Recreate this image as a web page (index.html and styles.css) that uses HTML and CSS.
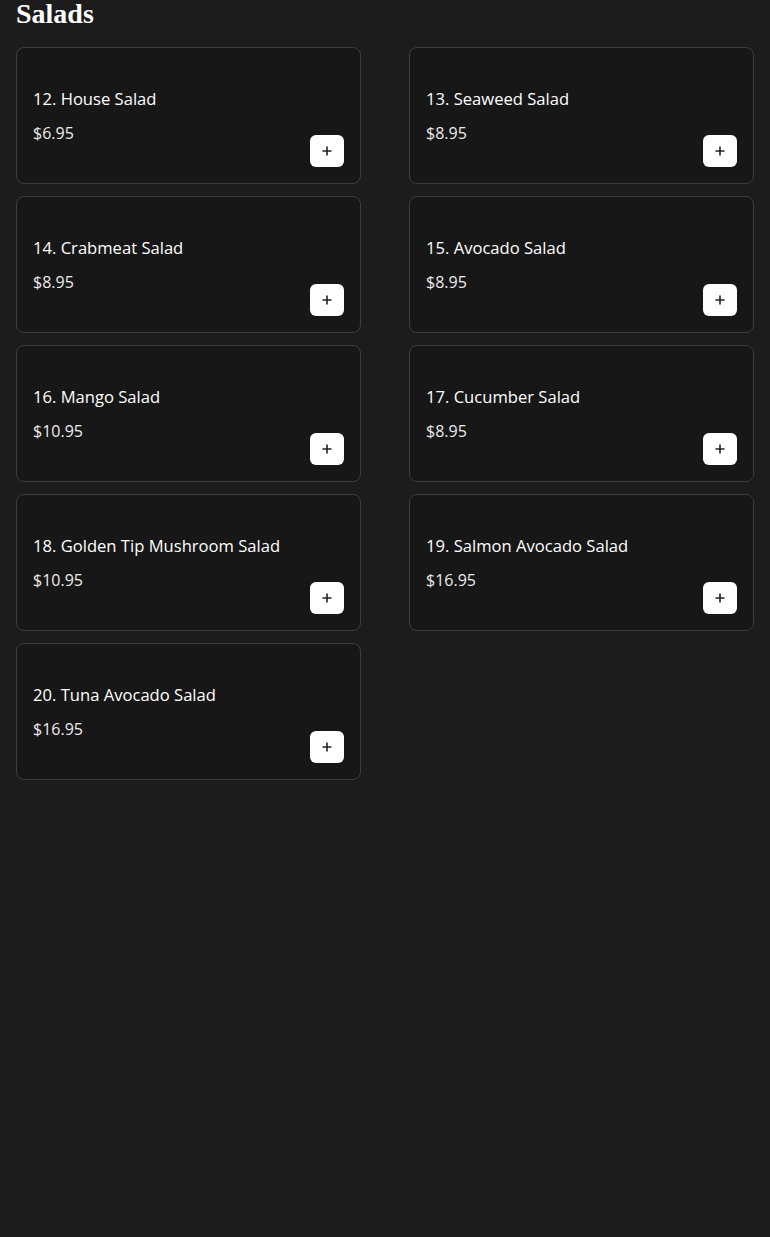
FILE: index.html
```html
<!DOCTYPE html>
<html lang="en">
<head>
<meta charset="utf-8">
<title>Salads</title>
<link rel="stylesheet" href="styles.css">
</head>
<body>
<section class="menu">
  <h2 class="menu-title">Salads</h2>
  <div class="grid">
    <div class="card"><div class="info"><div class="name">12. House Salad</div><div class="price">$6.95</div></div><button class="add"><svg viewBox="0 0 12 12" width="12" height="12"><path d="M6 1.5v9M1.5 6h9"/></svg></button></div>
    <div class="card"><div class="info"><div class="name">13. Seaweed Salad</div><div class="price">$8.95</div></div><button class="add"><svg viewBox="0 0 12 12" width="12" height="12"><path d="M6 1.5v9M1.5 6h9"/></svg></button></div>
    <div class="card"><div class="info"><div class="name">14. Crabmeat Salad</div><div class="price">$8.95</div></div><button class="add"><svg viewBox="0 0 12 12" width="12" height="12"><path d="M6 1.5v9M1.5 6h9"/></svg></button></div>
    <div class="card"><div class="info"><div class="name">15. Avocado Salad</div><div class="price">$8.95</div></div><button class="add"><svg viewBox="0 0 12 12" width="12" height="12"><path d="M6 1.5v9M1.5 6h9"/></svg></button></div>
    <div class="card"><div class="info"><div class="name">16. Mango Salad</div><div class="price">$10.95</div></div><button class="add"><svg viewBox="0 0 12 12" width="12" height="12"><path d="M6 1.5v9M1.5 6h9"/></svg></button></div>
    <div class="card"><div class="info"><div class="name">17. Cucumber Salad</div><div class="price">$8.95</div></div><button class="add"><svg viewBox="0 0 12 12" width="12" height="12"><path d="M6 1.5v9M1.5 6h9"/></svg></button></div>
    <div class="card"><div class="info"><div class="name">18. Golden Tip Mushroom Salad</div><div class="price">$10.95</div></div><button class="add"><svg viewBox="0 0 12 12" width="12" height="12"><path d="M6 1.5v9M1.5 6h9"/></svg></button></div>
    <div class="card"><div class="info"><div class="name">19. Salmon Avocado Salad</div><div class="price">$16.95</div></div><button class="add"><svg viewBox="0 0 12 12" width="12" height="12"><path d="M6 1.5v9M1.5 6h9"/></svg></button></div>
    <div class="card"><div class="info"><div class="name">20. Tuna Avocado Salad</div><div class="price">$16.95</div></div><button class="add"><svg viewBox="0 0 12 12" width="12" height="12"><path d="M6 1.5v9M1.5 6h9"/></svg></button></div>
  </div>
</section>
</body>
</html>
```
FILE: styles.css
```css
html, body {
  margin: 0;
  padding: 0;
  background: #1c1c1c;
  color: #ffffff;
  font-family: "Open Sans", "Noto Sans", sans-serif;
}
.menu {
  padding: 0 16px;
}
.menu-title {
  margin: 0 0 19px;
  font-family: "Liberation Serif", "DejaVu Serif", serif;
  font-weight: 700;
  font-size: 28px;
  line-height: 28px;
  color: #ffffff;
}
.grid {
  display: grid;
  grid-template-columns: 345px 345px;
  column-gap: 48px;
  row-gap: 12px;
}
.card {
  display: flex;
  justify-content: space-between;
  padding: 16px;
  border: 1px solid #3d3d3d;
  border-radius: 8px;
  background: #171717;
  height: 103px;
}
.info {
  display: flex;
  flex-direction: column;
  gap: 10px;
  padding-top: 23px;
}
.name {
  font-size: 16.6px;
  line-height: 24px;
  font-weight: 500;
  color: #ffffff;
}
.price {
  font-size: 16px;
  line-height: 24px;
  font-weight: 400;
  color: #ececec;
}
.add {
  align-self: flex-end;
  width: 34px;
  height: 32px;
  padding: 0;
  border: none;
  border-radius: 6px;
  background: #ffffff;
  display: flex;
  align-items: center;
  justify-content: center;
  cursor: pointer;
}
.add svg path {
  stroke: #222222;
  stroke-width: 1.6;
  fill: none;
}
```
